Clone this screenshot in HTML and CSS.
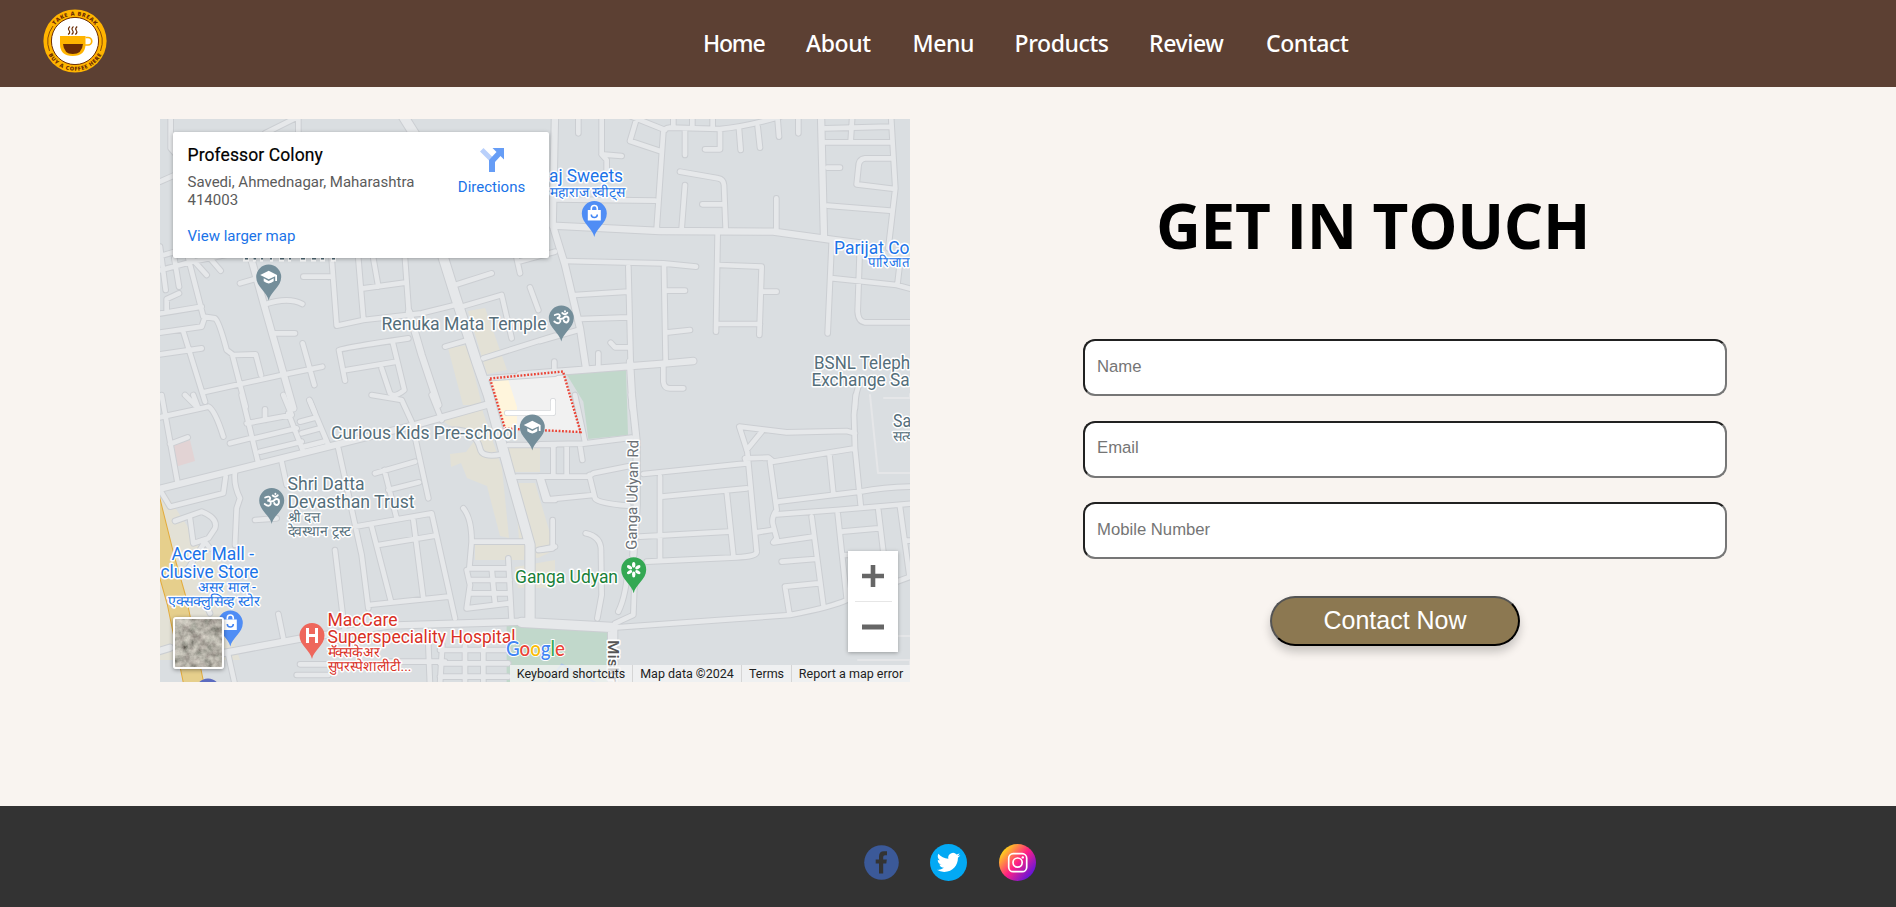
FILE: index.html
```html
<!DOCTYPE html>
<html lang="en">
<head>
<meta charset="utf-8">
<title>Contact</title>
<link rel="stylesheet" href="styles.css">
</head>
<body>
<header class="header">
  <svg class="logo" viewBox="0 0 64 64">
    <defs>
      <path id="arc-top" d="M6.500 32A25.500 25.500 0 0 1 57.500 32"/>
      <path id="arc-bottom" d="M2.200 32A29.800 29.800 0 0 0 61.800 32"/>
    </defs>
    <circle cx="32" cy="32" r="31.600" fill="#ffb400"/>
    <circle cx="32" cy="32" r="23.600" fill="#fff" stroke="#6b2c05" stroke-width="1"/>
    <g fill="none" stroke="#8a4b05" stroke-width="1"><path d="M10 17A26.600 26.600 0 0 0 6.500 42M54 17A26.600 26.600 0 0 1 57.500 42"/></g>
    <text class="logo-text"><textPath href="#arc-top" startOffset="50%" text-anchor="middle" textLength="46">TAKE A BREAK</textPath></text>
    <text class="logo-text"><textPath href="#arc-bottom" startOffset="50%" text-anchor="middle" textLength="65">BUY A COFFEE HERE</textPath></text>
    <path d="M17 27H42.500V35Q42.500 47 29.700 47Q17 47 17 35z" fill="#ffb400"/>
    <path d="M20 35H40Q39 45 29.700 45Q21 45 20 35z" fill="#6b2c05"/>
    <path d="M42.500 28.500H45A3.700 3.700 0 0 1 45 36H42" fill="none" stroke="#ffb400" stroke-width="1.700"/>
    <path d="M27 17.500q-2.500 2-.9 4t-1 4M30.500 17.500q-2.500 2-.9 4t-1 4M34.200 17.500q-2.500 2-.9 4t-1 4" fill="none" stroke="#6b2c05" stroke-width="1.200"/>
  </svg>
  <nav class="nav">
    <a class="tight">Home</a><a>About</a><a>Menu</a><a>Products</a><a>Review</a><a>Contact</a>
  </nav>
</header>

<main class="contact">
  <div class="map">
    <svg class="map-canvas" viewBox="160 119 750 563">
      <defs>
        <g id="minor">
          <g transform="translate(155 115) scale(.33333)">
            <path d="M47 0V100L60 115M15 200L60 180M430 0V60M330 55L430 5M0 428L54 412M0 470L110 440L260 410M15 395L32 525M58 430L72 515M110 430L155 480M165 430L197 467M35 590V552L72 535M0 598L140 575M100 430L145 605L180 610Q192 618 215 705L235 720L302 718L318 780M0 655L140 635L150 605M85 650L150 860M0 720L140 700M232 720L272 875M255 505L300 492M330 568Q400 545 442 567M355 655H420M145 832L380 780L502 755M443 685L478 810M445 485H525M530 430L545 632L625 615L800 595L900 570M610 430L625 610M655 430L670 515M625 520L750 503M750 430L762 600M570 797L552 705Q555 700 760 670M575 765L725 740M714 685L748 825Q718 850 705 835L680 760M465 858L478 890M870 695L940 675M920 575L1040 540L1070 670M900 510L1010 475M985 730L1200 662M1125 517L1150 585M1085 430L1095 475M1090 440L1200 410M990 790L1200 776"/>
          </g>
          <g transform="translate(540 115) scale(.33333)">
            <path d="M115 0V55M185 0V118L245 123M185 118L200 135V165M290 10L270 78L360 108M275 5L375 45M350 340L370 50Q372 40 390 38L540 42Q620 35 720 5M400 0V38M457 0V38M518 0V38M435 45V120M540 45V103H495M597 42L602 105M653 35L660 98M713 15L717 65M775 0V55M420 170L535 190Q550 192 552 210L557 340M435 210L425 340M487 268H550M45 253L345 257M709 250V345M855 40L1050 35M855 82H1055M937 0L932 80M1053 0L1066 220L1045 400M862 158H900M1055 130H975Q955 132 955 160L950 208L1065 222M862 272L1050 287M875 385L863 655M880 490L1070 510L1125 525M960 385L953 590Q955 620 975 622H1125M1078 460L1072 510M533 355L528 650M540 450L665 455L658 660M670 530H710M535 627H660M70 438L370 445L468 455M265 455L272 740M372 455L377 740M380 527H435M105 540L265 530M120 612L265 607M385 652L450 645M270 697H225L212 683M175 715V755M43 740V775M0 678L115 645M370 750V800Q372 820 390 820H430M945 880Q945 830 965 790"/>
          </g>
          <g transform="translate(155 395) scale(.33333)">
            <path d="M0 70L160 35Q180 45 205 125M20 0L68 265M45 147L98 127M90 0L120 30M115 0L130 40M260 0L310 205M275 85L410 60L385 0M330 43V75M225 145L285 130M400 55L445 170M463 15L520 150M300 130L425 100M315 170L440 140M435 80L480 68M440 115L495 100M445 155L505 140M18 290L45 335L205 295L212 245M240 230Q235 270 255 310L245 340L240 450M60 378L140 350Q190 370 180 400L160 430L115 445L105 370M380 200L395 270M300 375L365 370M550 160L620 480L640 640M540 465L568 700M660 235L780 200M688 225L725 370M700 285L792 262M600 395L830 355L900 670M770 80L820 310M650 395L708 620M670 450L840 422M640 630L880 605M775 375L805 610M650 0L740 15L770 80M830 0L860 75M370 657L385 730M220 780L240 870M885 105Q960 100 975 160Q980 190 1040 178M925 340Q950 370 950 440L943 520H1060M935 525L945 570L935 640L1060 625M950 440H1110M1010 520L1020 625M1060 490L1070 680M945 555H1065M945 595H1065M1150 465L1200 455M1085 245H1200M1060 150H1200M1150 245L1170 315H1200M820 750L825 870M862 750L855 870M930 750V870M985 760V870M690 800H870M435 808H520M425 840H520M855 765H1060M855 805H1060M855 845H1060M100 520L150 440L165 460M150 620L165 655"/>
          </g>
          <g transform="translate(540 395) scale(.33333)">
            <path d="M0 148L130 146L275 128M105 0L135 140M120 150L127 195M40 155V240M80 155V240M0 245H145L160 235L265 214M148 240L165 310Q175 325 265 332M5 250L25 313L160 300M38 375V460L0 465M137 415Q185 425 183 470L185 600L172 670M265 500Q260 600 235 650M285 520L280 660L225 685M310 237L620 205L615 190L685 188L700 200L945 160M360 245V490M365 305L620 280M560 290L580 480M622 170L650 470Q652 485 590 487L320 500M300 425L565 410M622 170L598 95L740 112L920 108L945 115M665 110L620 165M650 412L695 405M690 200L710 345Q695 365 698 385L710 430L700 442L820 425M715 320L960 290Q1040 275 1125 275M710 358L890 345L1125 325M868 175L880 295M947 0L942 60L945 160L962 330M815 365L850 630M893 355L920 610M905 410L1015 400M1015 345L1030 470M1080 335L1108 540M725 500L825 492M735 575L835 565M735 575L748 655M1100 437H1125M230 697L750 660Q880 635 920 615L1125 540M915 480H1000"/>
          </g>
        </g>
        <g id="medium">
          <g transform="translate(155 115) scale(.33333)"><path d="M280 400L330 580L415 880M762 590L800 720L850 870"/></g>
          <g transform="translate(540 115) scale(.33333)"><path d="M45 0L38 330L75 450L120 640L138 760M38 332L360 348L700 350L880 375L960 385M843 0L852 365M-60 779L380 745L460 738M270 740L278 880"/></g>
          <g transform="translate(155 395) scale(.33333)"><path d="M0 285L240 225L540 150L780 90L1000 28M0 772L45 758M200 775L440 730L700 692L1100 680"/></g>
          <g transform="translate(540 395) scale(.33333)"><path d="M275 0L290 140V330L280 480"/></g>
        </g>
        <g id="major">
          <g transform="translate(155 115) scale(.33333)"><path d="M730 -20L780 60L850 380L900 540L965 740L1000 840L1060 1060L1125 1290V1520M1100 1522L1370 1537M1373 1540V1720"/></g>
        </g>
        <path id="pin" d="M0 23.500C-1.500 15-12.500 10-12.500 0A12.500 12.500 0 1 1 12.500 0C12.500 10 1.500 15 0 23.500z"/>
        <g id="cap"><path d="M0-6.200L-8.500-2L0 2.300L6.500-.8V4H8.300V-2z"/><path d="M-5 1.300V4.300Q0 8.500 5 4.300V1.300L0 4z"/></g>
        <g id="bag"><path d="M-6.500-3.500H6.500V7H-6.500z"/><path d="M-3-3.500V-5A3 3 0 0 1 3-5V-3.500" fill="none" stroke="#fff" stroke-width="1.600"/><path d="M-3 1A3 3 0 0 0 3 1" fill="none" stroke="#4285f4" stroke-width="1.500"/></g>
        <g id="om" fill="none" stroke="#fff" stroke-width="1.900" stroke-linecap="round"><path d="M-6.500-3Q-2-5-1.500-2.500Q-1.500 0-4.500 0Q-.5 0-1 3.500Q-2.500 7-7 3.500M-1.500 1Q2 1 3-.7Q5-2.500 7-.5Q8 3 5.500 4.500Q3 4.500 2.500 2.500M1-5Q3.500-2.500 6-5.200M3.700-6.700V-6.500"/></g>
        <filter id="terrain" x="0" y="0" width="100%" height="100%">
          <feTurbulence type="fractalNoise" baseFrequency=".13" numOctaves="4" seed="8"/>
          <feColorMatrix values=".7 .25 0 0 -.03  .65 .3 0 0 -.05  .6 .25 0 0 -.05  0 0 0 0 1"/>
        </filter>
      </defs>
      <rect x="160" y="119" width="750" height="563" fill="#dadee1"/>
      <g fill="#e3e1d6">
        <path d="M448 348L467 345L482 405H463zM468 311L485 308L507 370L487 374zM442 421L482 409L502 468L509 538L500 536L487 486L467 478L461 463L451 467L450 454L466 452L475 440zM160 485L190 530L198 545L225 565L230 630L240 660H160zM508 447H540V472H510zM515 483H535L555 550L538 558L520 555zM475 545H524V560H475zM515 567L555 560V588H518z"/>
      </g>
      <path d="M171 446L190 440L195 461L175 467z" fill="#e2d3d4"/>
      <g transform="translate(540 395) scale(.33333)" fill="#c1d8cb">
        <path d="M78 -65L258 -75L264 120L145 132L130 20z"/>
        <path d="M-100 682L215 705V870H-100z"/><path d="M20 870L65 808L180 870" fill="none" stroke="#a9c3e5" stroke-width="5"/>
      </g>
      <path d="M490 379L563 372L581 432L505 429z" fill="#f1f1f1"/><path d="M491 380L508 379L517 407V428H505z" fill="#fff5dc"/>
      <g fill="none" stroke-linecap="round" stroke-linejoin="round">
        <use href="#minor" stroke="#cbced2" stroke-width="20"/><use href="#medium" stroke="#cbced2" stroke-width="25"/><use href="#major" stroke="#cbced2" stroke-width="34"/>
        <use href="#minor" stroke="#e6e8ea" stroke-width="14"/><use href="#medium" stroke="#e6e8ea" stroke-width="19"/><use href="#major" stroke="#e6e8ea" stroke-width="28"/>
        <path d="M870 395L878 473H910M884 398H910V394M855 636H910M858 660H910V665" stroke="#e5e6e8" stroke-width="2"/>
        <path d="M507 413H553V401" stroke="#d5d7da" stroke-width="6"/><path d="M507 413H553V401" stroke="#fff" stroke-width="4.500"/>
        <path d="M150 500L165 560L177 602L195 690" stroke="#e3ab3c" stroke-width="21"/><path d="M150 500L165 560L177 602L195 690" stroke="#e6cf8c" stroke-width="19"/>
      </g>
      <path d="M490 378.500L563 371.500L580.500 432L505 428.500z" fill="none" stroke="#ea4335" stroke-width="2.400" stroke-dasharray="1.800 1.600"/>

      <g class="pins">
        <g transform="translate(268.700 277)"><use href="#pin" fill="#748e9a"/><use href="#cap"/></g>
        <g transform="translate(532.300 427)"><use href="#pin" fill="#748e9a"/><use href="#cap"/></g>
        <g transform="translate(594.300 213.500)"><use href="#pin" fill="#4f8df5"/><use href="#bag"/></g>
        <g transform="translate(230.300 623)"><use href="#pin" fill="#4f8df5"/><use href="#bag"/></g>
        <g transform="translate(561.300 318)"><use href="#pin" fill="#748e9a"/><use href="#om"/></g>
        <g transform="translate(271.700 500.500)"><use href="#pin" fill="#748e9a"/><use href="#om"/></g>
        <g transform="translate(312 635.500)"><use href="#pin" fill="#ee675c"/><path d="M-6-7.500H-3V-1.500H3V-7.500H6V7.500H3V1.500H-3V7.500H-6z"/></g>
        <g transform="translate(633.700 569.700)"><use href="#pin" fill="#34a853"/><g><ellipse cy="-4.800" rx="1.700" ry="2.900"/><ellipse cy="-4.800" rx="1.700" ry="2.900" transform="rotate(60)"/><ellipse cy="-4.800" rx="1.700" ry="2.900" transform="rotate(120)"/><ellipse cy="-4.800" rx="1.700" ry="2.900" transform="rotate(180)"/><ellipse cy="-4.800" rx="1.700" ry="2.900" transform="rotate(240)"/><ellipse cy="-4.800" rx="1.700" ry="2.900" transform="rotate(300)"/></g></g>
        <use href="#pin" fill="#5c6bc0" x="208" y="691"/>
      </g>

      <g class="labels">
        <g class="blue">
          <text x="549" y="182" textLength="74" lengthAdjust="spacingAndGlyphs">aj Sweets</text><text class="hi" x="550" y="197" textLength="75" lengthAdjust="spacingAndGlyphs">महाराज स्वीट्स</text>
          <text x="834" y="253.500" textLength="75.500" lengthAdjust="spacingAndGlyphs">Parijat Co</text><text class="hi" x="868" y="267" textLength="41.500" lengthAdjust="spacingAndGlyphs">पारिजात</text>
          <text x="171.500" y="560" textLength="82.500" lengthAdjust="spacingAndGlyphs">Acer Mall -</text><text x="160.500" y="577.500" textLength="98" lengthAdjust="spacingAndGlyphs">clusive Store</text>
          <text class="hi" x="198" y="592" textLength="58" lengthAdjust="spacingAndGlyphs">असर माल -</text><text class="hi" x="167.500" y="606" textLength="93" lengthAdjust="spacingAndGlyphs">एक्सक्लुसिव्ह स्टोर</text>
        </g>
        <g class="slate">
          <text x="381.500" y="329.700" textLength="165" lengthAdjust="spacingAndGlyphs">Renuka Mata Temple</text>
          <text x="331" y="438.500" textLength="186" lengthAdjust="spacingAndGlyphs">Curious Kids Pre-school</text>
          <text x="814" y="368.500" textLength="96" lengthAdjust="spacingAndGlyphs">BSNL Teleph</text><text x="811.500" y="386" textLength="98" lengthAdjust="spacingAndGlyphs">Exchange Sa</text>
          <text x="893" y="426.500" textLength="18" lengthAdjust="spacingAndGlyphs">Sa</text><text class="hi" x="893" y="441">सत्य</text>
          <text x="287.500" y="490" textLength="77" lengthAdjust="spacingAndGlyphs">Shri Datta</text><text x="287.500" y="507.500" textLength="127" lengthAdjust="spacingAndGlyphs">Devasthan Trust</text>
          <text class="hi" x="287.500" y="522" textLength="33" lengthAdjust="spacingAndGlyphs">श्री दत्त</text><text class="hi" x="287.500" y="536" textLength="63" lengthAdjust="spacingAndGlyphs">देवस्थान ट्रस्ट</text>
        </g>
        <g class="red">
          <text x="327.500" y="625.500" textLength="70" lengthAdjust="spacingAndGlyphs">MacCare</text><text x="327.500" y="643" textLength="188" lengthAdjust="spacingAndGlyphs">Superspeciality Hospital</text>
          <text class="hi" x="327.500" y="657" textLength="52" lengthAdjust="spacingAndGlyphs">मॅक्सकेअर</text><text class="hi" x="327.500" y="671" textLength="84" lengthAdjust="spacingAndGlyphs">सुपरस्पेशालीटी...</text>
        </g>
        <text class="green" x="515" y="582.500" textLength="103" lengthAdjust="spacingAndGlyphs">Ganga Udyan</text>
        <text class="road" transform="translate(636.500 550) rotate(-89)" textLength="110" lengthAdjust="spacingAndGlyphs">Ganga Udyan Rd</text>
        <text class="road bold" transform="translate(607.500 640) rotate(90)" textLength="42" lengthAdjust="spacingAndGlyphs">Miskr</text>
      </g>
      <text class="google" x="506" y="656" textLength="59" lengthAdjust="spacingAndGlyphs"><tspan fill="#4285f4">G</tspan><tspan fill="#ea4335">o</tspan><tspan fill="#fbbc04">o</tspan><tspan fill="#4285f4">g</tspan><tspan fill="#34a853">l</tspan><tspan fill="#ea4335">e</tspan></text>
      <path d="M243 259.500H249M253 259.500H256M260 259.500H263M270 259.500H273M279 259.500H284M288 259.500H291M300 259.500H306M311 259.500H316M320 259.500H325M331 259.500H336" stroke="#fff" stroke-width="4"/>
      <path d="M245 258.500H248M253.500 258.500H256M261 258.500H263M270 258.500H272M280 258.500H284M289 258.500H291M301 258.500H305M312 258.500H316M321 258.500H324M332 258.500H335" stroke="#546e7a" stroke-width="2"/>
    </svg>
    <div class="place-card">
      <div class="place-info">
        <div class="place-name">Professor Colony</div>
        <div class="place-address">Savedi, Ahmednagar, Maharashtra 414003</div>
        <a class="place-link">View larger map</a>
      </div>
      <div class="directions">
        <svg width="24" height="24" viewBox="0 0 24 24"><path d="M3.500 0L0 3.500L9 12.500L12.500 9z" fill="#b9d0fb"/><path d="M12.500 0H24V11.500L20.500 8L15 14V24H9V12L16.500 4z" fill="#669df6"/></svg>
        <span>Directions</span>
      </div>
    </div>
    <svg class="satellite" viewBox="0 0 47 48"><rect width="47" height="48" filter="url(#terrain)"/></svg>
    <div class="zoom">
      <svg viewBox="0 0 50 50"><path d="M14 25H36M25 14V36" stroke="#666" stroke-width="4.600"/></svg>
      <svg viewBox="0 0 50 50"><path d="M14 26H36" stroke="#666" stroke-width="5"/></svg>
    </div>
    <div class="credits"><span>Keyboard shortcuts</span><span>Map data ©2024</span><span>Terms</span><span>Report a map error</span></div>
  </div>

  <form class="form">
    <h1>GET IN TOUCH</h1>
    <input type="text" placeholder="Name">
    <input type="text" placeholder="Email">
    <input type="text" placeholder="Mobile Number">
    <button type="button">Contact Now</button>
  </form>
</main>

<footer class="footer">
  <svg width="35" height="35" viewBox="0 0 35 35"><circle cx="17.500" cy="17.500" r="17.300" fill="#3b5998"/><path d="M15 28.500V18.500H11.700V14.400H15V11.500Q15 6.200 20 6.200H23V10.200H21Q19.200 10.200 19.200 12V14.400H22.800L22.300 18.500H19.200V28.500z" fill="#333"/></svg>
  <svg width="37" height="37" viewBox="0 0 37 37"><circle cx="18.500" cy="18.500" r="18.500" fill="#03a9f4"/><path transform="translate(6.800 6.700) scale(.98)" fill="#fff" d="M23.953 4.570a10 10 0 01-2.825.775 4.958 4.958 0 002.163-2.723c-.951.555-2.005.959-3.127 1.184a4.920 4.920 0 00-8.384 4.482C7.690 8.095 4.067 6.130 1.640 3.162a4.822 4.822 0 00-.666 2.475c0 1.710.87 3.213 2.188 4.096a4.904 4.904 0 01-2.228-.616v.06a4.923 4.923 0 003.946 4.827 4.996 4.996 0 01-2.212.085 4.936 4.936 0 004.604 3.417 9.867 9.867 0 01-6.102 2.105c-.39 0-.779-.023-1.170-.067a13.995 13.995 0 007.557 2.209c9.053 0 13.998-7.496 13.998-13.985 0-.21 0-.42-.015-.63A9.935 9.935 0 0024 4.590z"/></svg>
  <svg width="37" height="37" viewBox="0 0 37 37"><defs><linearGradient id="insta" x1=".1" y1=".15" x2=".9" y2=".85"><stop offset="0" stop-color="#ffdd15"/><stop offset=".5" stop-color="#ff1f84"/><stop offset="1" stop-color="#5a14e0"/></linearGradient></defs><circle cx="18.500" cy="18.500" r="18.500" fill="url(#insta)"/><g fill="none" stroke="#fff" stroke-width="1.700"><rect x="9.700" y="9.700" width="18" height="18" rx="4.500"/><circle cx="18.600" cy="18.600" r="4.600"/></g><circle cx="23.800" cy="13.400" r="1.200" fill="#fff"/></svg>
</footer>
</body>
</html>
```
FILE: styles.css
```css
* { box-sizing: border-box; }
body { margin: 0; height: 907px; overflow: hidden; background: #f9f4f0; font-family: "Liberation Sans", Arial, sans-serif; }

.header { height: 87px; background: #5c4033; display: flex; align-items: flex-start; }
.logo { width: 64px; height: 64px; margin: 8.500px 0 0 43px; }
.logo-text { font: 800 5.500px "Open Sans", sans-serif; fill: #6b2c05; }
.nav { display: grid; grid-template-columns: 103px 106.5px 102px 134.5px 117px 90px; margin: 25.500px 0 0 596px; }
.nav a { color: #fff; font: 500 23px/34px "Noto Sans", sans-serif; letter-spacing: -0.4px; white-space: nowrap; }
.nav .tight { letter-spacing: -1.2px; }

.contact { height: 719px; padding: 32px 0 0 160px; display: flex; align-items: flex-start; }
.map { position: relative; width: 750px; height: 563px; overflow: hidden; font-family: Roboto, sans-serif; }
.map-canvas { display: block; width: 750px; height: 563px; }
.pins { fill: #fff; }
.labels { font-size: 17.500px; stroke: #fff; stroke-width: 3px; stroke-linejoin: round; paint-order: stroke; }
.labels .hi { font-size: 14px; }
.blue { fill: #1a73e8; }
.slate { fill: #546e7a; }
.red { fill: #d93025; }
.green { fill: #188038; }
.labels .road { font-size: 15px; fill: #6b7075; }
.labels .bold { font-weight: 500; fill: #555; }
.google { font: 500 21px Lato, sans-serif; stroke: #fff; stroke-width: 2px; paint-order: stroke; }

.place-card { position: absolute; left: 13px; top: 13px; width: 376px; height: 126px; background: #fff; border-radius: 2px; box-shadow: 0 1px 4px rgba(0,0,0,.3); display: flex; padding: 12px 14.500px; }
.place-info { width: 250px; }
.place-name { font-size: 17.500px; line-height: 22px; font-weight: 400; letter-spacing: .1px; -webkit-text-stroke: .2px #000; }
.place-address { margin-top: 7px; font-size: 15px; line-height: 18px; color: #5b5b5b; }
.place-link { display: block; margin-top: 18px; font-size: 15px; line-height: 18px; color: #1a73e8; }
.directions { margin: 4px 0 0 21px; width: 66px; display: flex; flex-direction: column; align-items: center; font-size: 15px; line-height: 18px; color: #1a73e8; }
.directions span { margin-top: 6px; }
.satellite { position: absolute; left: 13px; top: 498px; width: 51px; height: 52px; border: 2px solid #fff; border-radius: 3px; box-shadow: 0 1px 4px rgba(0,0,0,.4); }
.zoom { position: absolute; left: 688px; top: 432px; width: 50px; height: 101px; background: #fff; box-shadow: 0 1px 4px rgba(0,0,0,.3); display: flex; flex-direction: column; }
.zoom svg { width: 50px; height: 50px; display: block; }
.zoom svg + svg { background: linear-gradient(#e6e6e6, #e6e6e6) center top / 37px 1px no-repeat; }
.credits { position: absolute; left: 350px; top: 546px; height: 17px; display: grid; grid-template-columns: 122px 109px 50px 119px; background: rgba(245,245,245,.75); font-size: 12.500px; line-height: 17px; color: #222; text-align: center; white-space: nowrap; }
.credits span + span { border-left: 1px solid #d5d5d5; }

.form { width: 644px; margin: 0 0 0 173px; padding-top: 64px; display: flex; flex-direction: column; }
.form h1 { margin: 0 0 71px 73px; font: 700 62px/85px "Open Sans", sans-serif; letter-spacing: -0.3px; color: #000; white-space: nowrap; }
.form input { height: 57px; margin: 0 0 24.500px; padding: 0 12px 2px; border: 2px inset #767676; border-radius: 12px; background: #fff; font: 16.700px "Liberation Sans", Arial, sans-serif; }
.form input::placeholder { color: #757575; }
.form button { width: 250px; height: 50px; margin: 12px 0 0 187px; border: 2px outset #000; border-radius: 25px; background: #8c7851; color: #fff; font: 25px "Liberation Sans", Arial, sans-serif; box-shadow: 0 6px 10px rgba(0,0,0,.2); }

.footer { height: 101px; background: #333; display: flex; align-items: center; justify-content: center; gap: 31.500px; padding: 12px 0 0 3px; }
```
